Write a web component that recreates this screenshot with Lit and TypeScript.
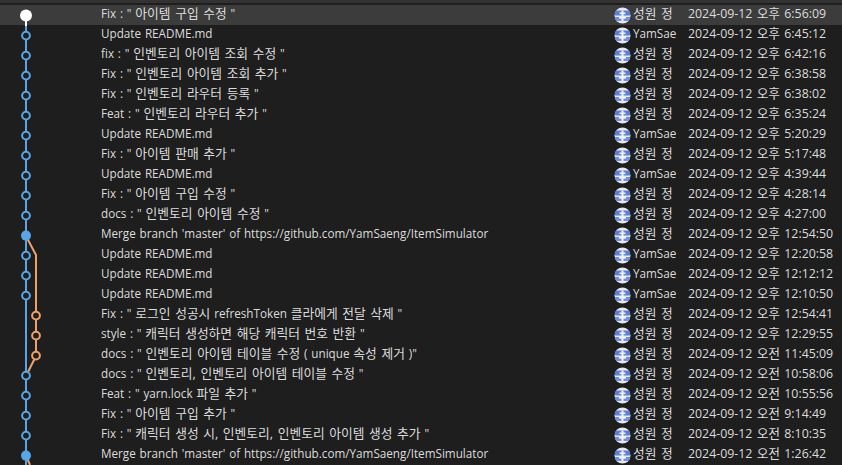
import { LitElement, html, css, svg } from "lit";
import { customElement } from "lit/decorators.js";

const S = "성원 정";
const Y = "YamSae";
const D = "2024-09-12";
const rows: [string, string, string][] = [
  ['Fix : " 아이템 구입 수정 "', S, "오후 6:56:09"],
  ["Update README.md", Y, "오후 6:45:12"],
  ['fix : " 인벤토리 아이템 조회 수정 "', S, "오후 6:42:16"],
  ['Fix : " 인벤토리 아이템 조회 추가 "', S, "오후 6:38:58"],
  ['Fix : " 인벤토리 라우터 등록 "', S, "오후 6:38:02"],
  ['Feat : " 인벤토리 라우터 추가 "', S, "오후 6:35:24"],
  ["Update README.md", Y, "오후 5:20:29"],
  ['Fix : " 아이템 판매 추가 "', S, "오후 5:17:48"],
  ["Update README.md", Y, "오후 4:39:44"],
  ['Fix : " 아이템 구입 수정 "', S, "오후 4:28:14"],
  ['docs : " 인벤토리 아이템 수정 "', S, "오후 4:27:00"],
  ["Merge branch 'master' of https://github.com/YamSaeng/ItemSimulator", S, "오후 12:54:50"],
  ["Update README.md", Y, "오후 12:20:58"],
  ["Update README.md", Y, "오후 12:12:12"],
  ["Update README.md", Y, "오후 12:10:50"],
  ['Fix : " 로그인 성공시 refreshToken 클라에게 전달 삭제 "', S, "오후 12:54:41"],
  ['style : " 캐릭터 생성하면 해당 캐릭터 번호 반환 "', S, "오후 12:29:55"],
  ['docs : " 인벤토리 아이템 테이블 수정 ( unique 속성 제거 )"', S, "오전 11:45:09"],
  ['docs : " 인벤토리, 인벤토리 아이템 테이블 수정 "', S, "오전 10:58:06"],
  ['Feat : " yarn.lock 파일 추가 "', S, "오전 10:55:56"],
  ['Fix : " 아이템 구입 추가 "', S, "오전 9:14:49"],
  ['Fix : " 캐릭터 생성 시, 인벤토리, 인벤토리 아이템 생성 추가 "', S, "오전 8:10:35"],
  ["Merge branch 'master' of https://github.com/YamSaeng/ItemSimulator", S, "오전 1:26:42"],
];

const BLUE = "#5aa5e6";
const ORANGE = "#f0a06a";
const cy = (i: number) => 15.6 + i * 20;

function ko(text: string) {
  return text
    .split(/([\uac00-\ud7a3]+(?:[ ,]+[\uac00-\ud7a3]+)*)/)
    .map((p, i) => (i % 2 ? html`<span class="ko">${p}</span>` : p));
}

@customElement("app-root")
export class AppRoot extends LitElement {
  static styles = css`
    :host {
      display: block;
      width: 842px;
      height: 465px;
      overflow: hidden;
      position: relative;
      background: #1e1e1e;
      font-family: "Open Sans", "Noto Sans CJK KR", sans-serif;
      font-size: 11.7px;
      color: #dcdcdc;
    }
    .ko {
      font-size: 12.75px;
      word-spacing: 1.3px;
    }
    .top {
      height: 5px;
      background: linear-gradient(#333 0 3px, #1e1e1e 3px);
    }
    .graph {
      position: absolute;
      left: 0;
      top: 0;
      display: block;
    }
    .row {
      display: grid;
      grid-template-columns: 101px 513px 19px 1fr;
      height: 20px;
      line-height: 16px;
      white-space: nowrap;
    }
    .row.sel {
      background: #3c3c3c;
    }
    .msg {
      grid-column: 2;
      overflow: hidden;
      word-spacing: 0.8px;
    }
    .av {
      grid-column: 3;
      display: flex;
      align-items: center;
    }
    .av svg {
      display: block;
    }
    .meta {
      grid-column: 4;
      display: grid;
      grid-template-columns: 55px auto;
    }
    .date {
      font-size: 12.35px;
      word-spacing: 1px;
    }
  `;

  private node(i: number, color: string, x: number, kind: "ring" | "fill" | "head") {
    const y = cy(i);
    if (kind === "head") return svg`<circle cx=${x} cy=${y} r="6" fill="#fff"/>`;
    if (kind === "fill") return svg`<circle cx=${x} cy=${y} r="5" fill=${color}/>`;
    return svg`<circle cx=${x} cy=${y} r="3.9" fill="#1e1e1e" stroke=${color} stroke-width="2"/>`;
  }

  private graph() {
    const o = [15, 16, 17];
    const blueIdx = Array.from({ length: 23 }, (_, i) => i).filter(
      (i) => !o.includes(i) && i !== 0 && i !== 11 && i !== 22
    );
    return html`<svg class="graph" width="90" height="465" viewBox="0 0 90 465">
      <line x1="26" y1="15" x2="26" y2="26" stroke="#fff" stroke-width="2" />
      <line x1="26" y1="26" x2="26" y2="465" stroke=${BLUE} stroke-width="2" />
      <path d="M27 238L36 255V356L27 374" fill="none" stroke=${ORANGE} stroke-width="2" />
      <path d="M27 458L30 465" fill="none" stroke=${ORANGE} stroke-width="2" />
      ${blueIdx.map((i) => this.node(i, BLUE, 26, "ring"))}
      ${[11, 22].map((i) => this.node(i, BLUE, 26, "fill"))}
      ${o.map((i) => this.node(i, ORANGE, 36, "ring"))}
      ${this.node(0, "#fff", 26, "head")}
    </svg>`;
  }

  private avatar() {
    return html`<svg width="17" height="17" viewBox="0 0 17 17">
      <defs>
        <clipPath id="c"><circle cx="8.5" cy="8.5" r="8" /></clipPath>
      </defs>
      <g clip-path="url(#c)">
        <rect width="17" height="17" fill="#e8e8ee" />
        <rect x="1" y="3.5" width="15" height="5" fill="#5b7fd8" />
        <rect x="1" y="10" width="15" height="4" fill="#6f90e0" />
        <rect x="5.5" y="5.5" width="6" height="1.6" fill="#f4f4f8" />
        <rect x="7.5" y="3.5" width="2" height="10.5" fill="#f4f4f8" />
        <rect x="5" y="10" width="7" height="1.6" fill="#f4f4f8" />
      </g>
    </svg>`;
  }

  render() {
    return html`<div class="top"></div>
      ${rows.map(
        (r, i) => html`<div class="row ${i === 0 ? "sel" : ""}">
          <div class="msg">${ko(r[0])}</div>
          <div class="av">${this.avatar()}</div>
          <div class="meta">
            <span>${ko(r[1])}</span><span class="date">${D} ${ko(r[2])}</span>
          </div>
        </div>`
      )}
      ${this.graph()}`;
  }
}
